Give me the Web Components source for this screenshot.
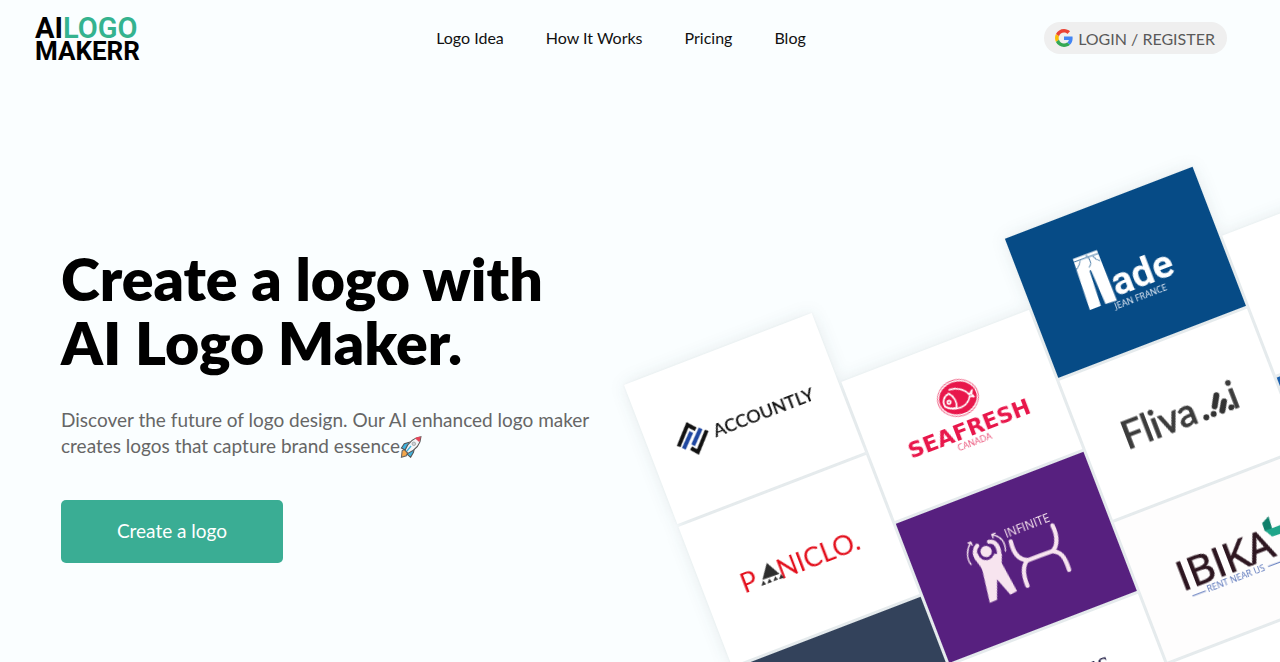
<!DOCTYPE html>
<html lang="en">
<head>
<meta charset="utf-8">
<meta name="viewport" content="width=device-width, initial-scale=1">
<title>AI Logo Makerr</title>
<style>
  body {
    margin: 0;
    height: 100vh;
    background: #fafeff;
    color: #000;
    font-family: Lato, "Liberation Sans", sans-serif;
  }
</style>
</head>
<body>
<logo-app></logo-app>

<script>
class BrandMark extends HTMLElement {
  constructor() {
    super();
    this.attachShadow({ mode: 'open' });
  }

  connectedCallback() {
    this.shadowRoot.innerHTML = `
      <style>
        :host { display: block; }
        a {
          display: flex;
          flex-direction: column;
          padding-top: 2px;
          color: #000;
          font: 700 26px/22px Roboto, "Liberation Sans", sans-serif;
          text-decoration: none;
        }
        .top { font-size: 29px; line-height: 24px; }
        .green { color: #34b38f; font-weight: 600; }
      </style>
      <a href="#"><span class="top">AI<span class="green">LOGO</span></span><span>MAKERR</span></a>
    `;
  }
}

class LoginButton extends HTMLElement {
  constructor() {
    super();
    this.attachShadow({ mode: 'open' });
  }

  connectedCallback() {
    this.shadowRoot.innerHTML = `
      <style>
        :host { display: block; }
        button {
          display: flex;
          align-items: center;
          gap: 5px;
          height: 32px;
          padding: 0 12px 0 11px;
          border: 0;
          border-radius: 16px;
          background: #efefef;
          color: #5a5a5a;
          font: inherit;
          font-size: 16px;
          cursor: pointer;
        }
        svg { width: 18px; height: 18px; }
      </style>
      <button type="button">
        <svg viewBox="0 0 48 48" aria-hidden="true">
          <path fill="#ea4335" d="M24 9.5c3.54 0 6.71 1.22 9.21 3.6l6.85-6.85C35.9 2.38 30.47 0 24 0 14.62 0 6.51 5.38 2.56 13.22l7.98 6.19C12.43 13.72 17.74 9.5 24 9.5z"/>
          <path fill="#4285f4" d="M46.98 24.55c0-1.57-.15-3.09-.38-4.55H24v9.02h12.94c-.58 2.96-2.26 5.48-4.78 7.18l7.73 6c4.51-4.18 7.09-10.36 7.09-17.65z"/>
          <path fill="#fbbc05" d="M10.53 28.59c-.48-1.45-.76-2.99-.76-4.59s.27-3.14.76-4.59l-7.98-6.19C.92 16.46 0 20.12 0 24c0 3.88.92 7.54 2.56 10.78l7.97-6.19z"/>
          <path fill="#34a853" d="M24 48c6.48 0 11.93-2.13 15.89-5.81l-7.73-6c-2.15 1.45-4.92 2.3-8.16 2.3-6.26 0-11.57-4.22-13.47-9.91l-7.98 6.19C6.51 42.62 14.62 48 24 48z"/>
        </svg>
        <slot></slot>
      </button>
    `;
  }
}

class NavBar extends HTMLElement {
  constructor() {
    super();
    this.attachShadow({ mode: 'open' });
  }

  connectedCallback() {
    this.shadowRoot.innerHTML = `
      <style>
        :host { display: block; }
        header {
          display: grid;
          grid-template-columns: 20fr auto 21fr;
          align-items: center;
          height: 76px;
          padding: 0 53px 0 35px;
        }
        nav { display: flex; gap: 42px; }
        nav a {
          color: #111;
          font-size: 16px;
          line-height: 24px;
          text-decoration: none;
        }
        nav a:hover { color: #3aad94; }
        brand-mark { justify-self: start; }
        login-button { justify-self: end; }
      </style>
      <header>
        <brand-mark></brand-mark>
        <nav>
          <a href="#ideas">Logo Idea</a>
          <a href="#how">How It Works</a>
          <a href="#pricing">Pricing</a>
          <a href="#blog">Blog</a>
        </nav>
        <login-button>LOGIN / REGISTER</login-button>
      </header>
    `;
  }
}

class HeroIntro extends HTMLElement {
  constructor() {
    super();
    this.attachShadow({ mode: 'open' });
  }

  connectedCallback() {
    this.shadowRoot.innerHTML = `
      <style>
        :host { display: block; }
        h1 {
          margin: 0;
          font-size: 59px;
          font-weight: 800;
          line-height: 64px;
          white-space: nowrap;
        }
        p {
          margin: 32px 0 41px;
          color: #666;
          font-size: 19px;
          line-height: 26px;
        }
        svg { width: 22px; height: 22px; vertical-align: -5px; }
        button {
          min-width: 222px;
          height: 63px;
          padding: 0 24px 2px;
          border: 0;
          border-radius: 5px;
          background: #3aad94;
          color: #fff;
          font: inherit;
          font-size: 19px;
          cursor: pointer;
        }
        button:hover { background: #319a83; }
      </style>
      <h1>Create a logo with<br>AI Logo Maker.</h1>
      <p>Discover the future of logo design. Our AI enhanced logo maker<br>creates logos that capture brand essence<svg viewBox="0 0 60 62" role="img" aria-label="rocket">
          <path fill="#f4a64a" stroke="#666" stroke-width="3" d="M3 60l2-18 8-5 8 10-4 9z"/>
          <path fill="#3fb4e0" stroke="#555" stroke-width="3" d="M3 34l8-12 16-5-12 23zM29 60l8-14 4-18-22 23z"/>
          <path fill="#f2f5f7" stroke="#555" stroke-width="3" d="M13 40C22 18 34 5 58 2c-1 24-15 37-37 47z"/>
          <path fill="#e5475a" d="M41 6c6-3 11-4 16-4 0 5-1 10-4 15z"/>
          <circle cx="38" cy="22" r="5" fill="#ccd3d8" stroke="#999" stroke-width="2"/>
          <path stroke="#3fb4e0" stroke-width="4" d="M18 43l12-15"/>
        </svg></p>
      <button type="button">Create a logo</button>
    `;
  }
}

class LogoCard extends HTMLElement {
  constructor() {
    super();
    this.attachShadow({ mode: 'open' });
  }

  connectedCallback() {
    this.shadowRoot.innerHTML = `
      <style>
        :host {
          display: block;
          width: 201px;
          height: 149px;
          background: var(--card, #fff);
        }
        ::slotted(svg) { display: block; width: 201px; height: 149px; }
      </style>
      <slot></slot>
    `;
  }
}

// Tilted wall of sample logos. Inside a card, groups with rotate(21)
// are drawn upright and at three times their size.
class LogoWall extends HTMLElement {
  constructor() {
    super();
    this.attachShadow({ mode: 'open' });
  }

  connectedCallback() {
    this.shadowRoot.innerHTML = `
      <style>
        :host { display: block; }
        .wall {
          display: flex;
          align-items: flex-start;
          gap: 3px;
          width: max-content;
          transform: rotate(-21deg);
          transform-origin: 0 0;
          filter: drop-shadow(0 0 1px rgba(20, 40, 50, .05)) drop-shadow(0 0 8px rgba(20, 40, 50, .09));
        }
        .column { display: grid; gap: 3px; }
        .column:nth-child(even) { margin-top: 75px; }
        .blue { --card: #064b86; }
        .purple { --card: #57207f; }
        .navy { --card: #33425b; }
        .azure { --card: #1c60ad; }
        .cream { --card: #fefdfd; }
        .caption { font: 9px "Open Sans", sans-serif; }
      </style>
      <div class="wall">
        <div class="column">
          <logo-card>
            <svg viewBox="0 0 201 149">
              <g fill="none" stroke-width="4">
                <path stroke="#111" d="M29 77L45 60l6 7M61 72L45 89l-5-6"/>
                <path stroke="#1f47a0" d="M46 68L33 81M56 68L43 81"/>
              </g>
              <text x="67" y="82" font-family="Lato" font-size="18" font-weight="600" fill="#111">ACCOUNTLY</text>
            </svg>
          </logo-card>
          <logo-card>
            <svg viewBox="0 0 201 149">
              <g font-family="Lato" font-size="27" fill="#e30f1c">
                <text x="38" y="86">P</text>
                <text x="77" y="86">NICLO.</text>
              </g>
              <g transform="rotate(21) translate(-18 -27) scale(.3333)" fill="#2d2d2d">
                <path d="M319 189l38 33-51 18z"/>
                <path d="M308 242l-5 16 14-5zM326 236l-5 15 14-5zM344 229l-5 15 14-5zM361 223l-5 15 15-5z"/>
              </g>
            </svg>
          </logo-card>
          <logo-card class="navy"></logo-card>
        </div>
        <div class="column">
          <logo-card>
            <svg viewBox="0 0 201 149">
              <g transform="rotate(21) translate(0 -82) scale(.3333)">
                <ellipse cx="350" cy="294" rx="62" ry="55" fill="none" stroke="#e8174b" stroke-width="2" transform="rotate(-15 350 294)"/>
                <ellipse cx="350" cy="294" rx="57" ry="49" fill="#e8174b" transform="rotate(-15 350 294)"/>
                <g fill="none" stroke="#fff" stroke-width="5" stroke-linecap="round" stroke-linejoin="round">
                  <path d="M324 270c20-8 46-2 60 14l8-14-2 12 8 8-13-1c-4 28-36 48-72 32"/>
                  <path d="M322 281c-16 10-20 27-10 40 9 6 22 6 34 2 2-16-8-34-24-42z"/>
                  <circle cx="323" cy="307" r="5"/>
                </g>
              </g>
              <text x="38" y="97" font-family="DejaVu Sans" font-size="22" font-weight="700" fill="#e8174b">SEAFRESH</text>
              <text class="caption" x="103" y="107" text-anchor="middle" fill="#ea5077">CANADA</text>
            </svg>
          </logo-card>
          <logo-card class="purple">
            <svg viewBox="0 0 201 149">
              <g transform="rotate(21) translate(5 -44) scale(.3333)" fill="none" stroke="#f7e4ef" stroke-linecap="round" stroke-linejoin="round">
                <path fill="#f7e4ef" stroke="none" d="M216 222c4 22 27 35 30 55l21 92 22-9v-61l40 46 20-11-46-84v-28z"/>
                <path stroke-width="13" d="M229 198c-9 10-9 26 0 38M265 186c20-3 31 16 31 46"/>
                <circle cx="256" cy="216" r="25" fill="#57207f" stroke="none"/>
                <circle cx="256" cy="215" r="17" fill="#f7e4ef" stroke="none"/>
                <path stroke-width="4" d="M211 254c-14-16-14-44-2-64m-7 0l8-3 4 9M314 214c0-26-14-44-39-49m8-5l-10 4 4 10"/>
                <path stroke-width="13" d="M330 185c8 36 24 55 50 56l75-27c16-14 16-46 0-77M380 241c-14 16-14 42 0 77M455 214c26 1 38 18 50 56"/>
              </g>
              <text x="98" y="53" font-family="Open Sans" font-size="12" fill="#f7e4ef">INFINITE</text>
            </svg>
          </logo-card>
          <logo-card>
            <svg viewBox="0 0 201 149">
              <text x="150" y="61" text-anchor="end" font-family="Liberation Serif" font-size="30" fill="#1b1740">us</text>
            </svg>
          </logo-card>
        </div>
        <div class="column">
          <logo-card class="blue">
            <svg viewBox="0 0 201 149">
              <g transform="rotate(21) translate(-4 -88) scale(.3333)">
                <path fill="#fff" d="M216 325l72-27 60 151-34 11-44-102-4 2 34 105-33 13z"/>
                <path fill="none" stroke="#064b86" stroke-width="2" d="M219 334l73-26M238 330q-2 17-12 27M276 316q8 12 22 14M262 320q14 20 2 30M254 316l6-2"/>
              </g>
              <text x="84" y="94" font-family="Roboto" font-size="39" font-weight="700" fill="#fff">ade</text>
              <text class="caption" x="106" y="106" text-anchor="middle" fill="#e8eef8">JEAN FRANCE</text>
            </svg>
          </logo-card>
          <logo-card>
            <svg viewBox="0 0 201 149">
              <g font-family="Lato" font-size="38" fill="#3c3c3c" stroke="#3c3c3c">
                <text x="39" y="89">Fliva</text>
                <text x="152" y="89">i</text>
              </g>
              <g transform="rotate(21) translate(22 -30) scale(.3333)" fill="#333">
                <circle cx="375" cy="200" r="9"/>
                <circle cx="397" cy="190" r="9"/>
                <circle cx="450" cy="170" r="9"/>
                <path stroke="#333" stroke-width="18" stroke-linecap="round" d="M405 134l-5 33M428 152l-5 28"/>
              </g>
            </svg>
          </logo-card>
          <logo-card class="cream">
            <svg viewBox="0 0 201 149">
              <text x="40" y="89" font-family="Open Sans" font-size="41" font-weight="500" fill="#2d1620" stroke="#2d1620">IBIKA</text>
              <text class="caption" x="94" y="99" text-anchor="middle" fill="#5470b8">RENT NEAR US</text>
              <g transform="rotate(21) translate(-33 -42) scale(.3333)">
                <path stroke="#5470b8" stroke-width="3" d="M335 346l40-15M562 258l60-23"/>
                <path fill="#0f7f6a" d="M544 128l19-21 11 37-22 8z"/>
                <path fill="#1fa58a" d="M552 150l22-7 60-24 10 26-70 23z"/>
              </g>
            </svg>
          </logo-card>
          <logo-card></logo-card>
        </div>
        <div class="column">
          <logo-card></logo-card>
          <logo-card class="azure"></logo-card>
          <logo-card></logo-card>
        </div>
      </div>
    `;
  }
}

class LogoApp extends HTMLElement {
  constructor() {
    super();
    this.attachShadow({ mode: 'open' });
  }

  connectedCallback() {
    this.shadowRoot.innerHTML = `
      <style>
        :host {
          display: flex;
          flex-direction: column;
          height: 100%;
          overflow: hidden;
        }
        main {
          display: grid;
          grid-template-columns: 39fr 41fr;
          align-items: start;
          flex: 1;
          min-height: 0;
        }
        hero-intro { min-width: 0; padding: 171px 0 0 61px; }
        logo-wall { min-width: 0; padding-top: 309px; }
      </style>
      <nav-bar></nav-bar>
      <main>
        <hero-intro></hero-intro>
        <logo-wall></logo-wall>
      </main>
    `;
  }
}

customElements.define('brand-mark', BrandMark);
customElements.define('login-button', LoginButton);
customElements.define('nav-bar', NavBar);
customElements.define('hero-intro', HeroIntro);
customElements.define('logo-card', LogoCard);
customElements.define('logo-wall', LogoWall);
customElements.define('logo-app', LogoApp);
</script>
</body>
</html>
